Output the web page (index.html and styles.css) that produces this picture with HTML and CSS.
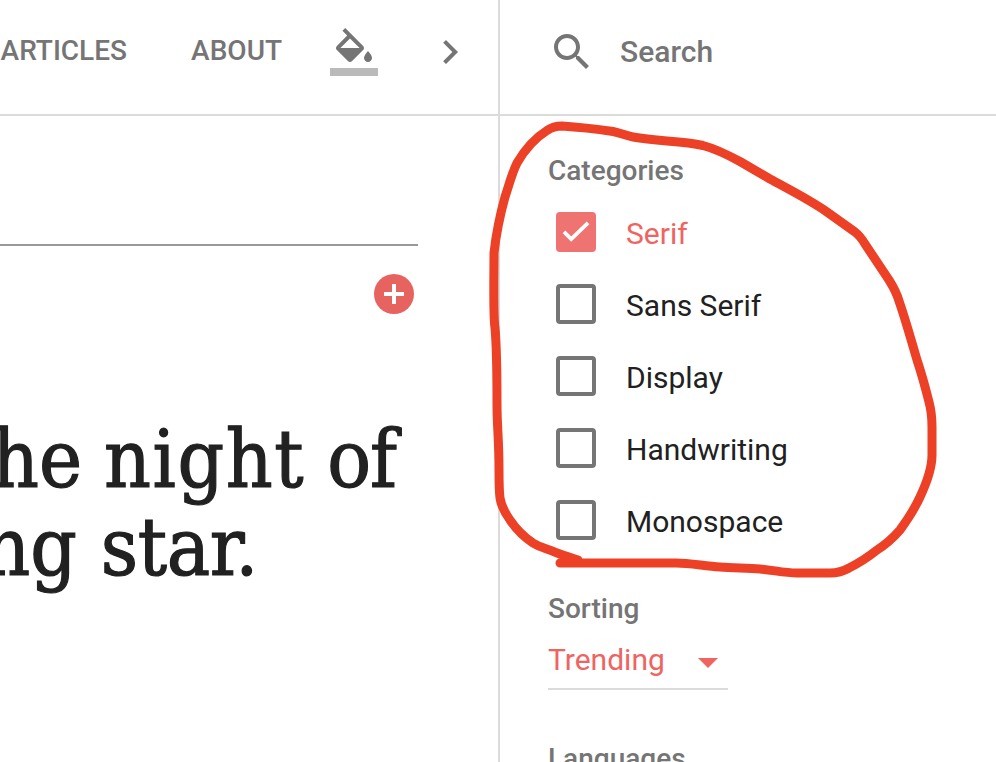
FILE: index.html
```html
<!DOCTYPE html>
<html lang="en">
<head>
<meta charset="utf-8">
<title>Fonts</title>
<link rel="stylesheet" href="styles.css">
</head>
<body>
<div class="app">
  <main class="main">
    <nav class="nav">
      <a class="nav-link">ARTICLES</a>
      <a class="nav-link about">ABOUT</a>
      <svg class="icon fill-icon" viewBox="0 0 24 24"><path d="M16.56 8.94L7.62 0 6.21 1.41l2.38 2.38-5.15 5.15c-.59.59-.59 1.54 0 2.12l5.5 5.5c.29.29.68.44 1.06.44s.77-.15 1.06-.44l5.5-5.5c.59-.58.59-1.53 0-2.12zM5.21 10L10 5.21 14.79 10H5.21zM19 11.5s-2 2.17-2 3.5c0 1.1.9 2 2 2s2-.9 2-2c0-1.33-2-3.5-2-3.5z"/><path class="swatch" d="M0 20h24v4H0z"/></svg>
      <svg class="icon" viewBox="0 0 24 24"><path d="M10 6L8.59 7.41 13.17 12l-4.58 4.59L10 18l6-6z"/></svg>
    </nav>
    <section class="card">
      <button class="add" aria-label="Add"><svg viewBox="0 0 40 40"><path d="M20 10v20M10 20h20"/></svg></button>
      <p class="sample"><span class="line first"><span>he</span> <span class="wide">night</span> <span class="tight">of</span></span><span class="line second"><span>ng</span> <span class="snug">star.</span></span></p>
    </section>
  </main>
  <aside class="side">
    <div class="search">
      <svg class="icon" viewBox="0 0 24 24"><path d="M15.5 14h-.79l-.28-.27C15.41 12.59 16 11.11 16 9.5 16 5.91 13.09 3 9.5 3S3 5.91 3 9.5 5.91 16 9.5 16c1.61 0 3.09-.59 4.23-1.57l.27.28v.79l5 4.99L20.49 19l-4.99-5zm-6 0C7.01 14 5 11.99 5 9.5S7.01 5 9.5 5 14 7.01 14 9.5 11.99 14 9.5 14z"/></svg>
      <span class="search-label">Search</span>
    </div>
    <div class="filters">
      <h2 class="heading">Categories</h2>
      <ul class="options">
        <li class="option selected"><span class="box"><svg viewBox="0 0 40 40"><path d="M8 19.8l7.2 7.2L32 10.8"/></svg></span><span class="name">Serif</span></li>
        <li class="option"><span class="box"></span><span class="name">Sans Serif</span></li>
        <li class="option"><span class="box"></span><span class="name">Display</span></li>
        <li class="option"><span class="box"></span><span class="name">Handwriting</span></li>
        <li class="option"><span class="box"></span><span class="name">Monospace</span></li>
      </ul>
      <h2 class="heading sorting">Sorting</h2>
      <div class="select"><span>Trending</span><svg class="arrow" viewBox="0 0 20 10"><path d="M0 0h20L10 10z"/></svg></div>
      <h2 class="heading languages">Languages</h2>
    </div>
  </aside>
  <svg class="marker" viewBox="0 0 996 762"><path d="M578 560C572 558 565 556 557 553C549 549 541 548 533 543C524 537 516 529 510 520C505 513 501 505 500 498C499 490 499 480 499 470C499 440 497 425 497 405C497 375 497 350 495 328C493 315 494 275 494 253C496 235 500 215 505 197C509 185 512 173 517 163C524 151 535 138 547 130.500C552 127 557 126 562 126C578 127 596 129 613 131.500C621 133 626 136 633 137C644 139 655 140 667 141C680 142 692 143 703 145.500C716 149 728 155 740 161.500L770 179C790 190 810 200 827 212L855 232C859 235 862 239 865 244L889 280C894 288 897 294 899 301C906 321 911 340 917 360C923 378 926 390 929 402C932 413 932 420 932 427L932 455C932 468 928 480 920 497C915 508 908 519 900 530C893 538 885 545 877 550C867 558 857 564 849 568C842 572 838 573 830 573L797 573C784 573 773 570 760 569C746 568 733 568 720 567C704 566 690 563 676 563L560 563"/></svg>
</div>
</body>
</html>
```
FILE: styles.css
```css
* { box-sizing: border-box; }
body { margin: 0; background: #fff; font-family: Roboto, "Liberation Sans", sans-serif; color: #212121; }
.app { position: relative; display: flex; width: 996px; height: 762px; overflow: hidden; }
.main { width: 498px; flex: none; }
.side { flex: 1; border-left: 2px solid #dbdbdb; }
.nav, .search { display: flex; align-items: center; height: 116px; border-bottom: 2px solid #dbdbdb; padding-bottom: 10px; color: #757575; font-size: 28px; font-weight: 500; line-height: 36px; }
.nav-link { width: 190.500px; margin-top: -3px; padding-left: .6px; white-space: nowrap; flex: none; }
.about { width: 139.500px; }
.icon { width: 48px; height: 48px; fill: #757575; flex: none; }
.fill-icon { margin-right: 48px; }
.swatch { opacity: .5; }
.card { width: 418px; margin-top: 128px; border-top: 2px solid #999; padding-top: 28px; }
.add { display: block; width: 40px; height: 40px; margin: 0 4px 0 auto; padding: 0; border: 0; border-radius: 50%; background: #e66360; }
.add svg { display: block; stroke: #fff; stroke-width: 4; }
.sample { margin: 101px 0 0; font-family: "Roboto Slab", "DejaVu Serif", serif; font-stretch: condensed; font-size: 81px; line-height: 88px; white-space: nowrap; -webkit-text-stroke: 1.2px #212121; }
.line { display: flex; justify-content: flex-end; gap: 22px; }
.first { width: 396px; }
.second { width: 258px; gap: 24px; }
.wide { letter-spacing: 1.6px; }
.tight { letter-spacing: -1px; }
.snug { letter-spacing: -.4px; }
.search { padding-left: 48px; }
.search-label { margin-left: 24px; font-size: 30px; }
.filters { padding: 36px 0 0 48px; }
.heading { margin: 0; font-size: 28px; font-weight: 500; line-height: 38px; color: #757575; }
.options { list-style: none; margin: 6px 0 0; padding: 0; }
.option { display: flex; align-items: center; height: 72px; padding-left: 8px; font-size: 30px; }
.box { width: 40px; height: 40px; border: 4px solid #757575; border-radius: 4px; margin-right: 30px; }
.name { margin-top: 3px; }
.selected { color: #ef6461; }
.selected .box { border: 0; background: #ef7370; }
.box svg { display: block; fill: none; stroke: #fff; stroke-width: 3.800; }
.sorting { margin-top: 34px; }
.select { display: flex; align-items: center; width: 180px; height: 62px; border-bottom: 2px solid #dbdbdb; padding: 2px 10.500px 0 0; justify-content: space-between; color: #ef6461; font-size: 30px; }
.arrow { width: 20px; height: 10px; fill: #ef6461; margin-top: 8px; }
.languages { margin-top: 50px; }
.marker { position: absolute; inset: 0; width: 996px; height: 762px; fill: none; stroke: #ec4126; stroke-width: 9; stroke-linecap: round; stroke-linejoin: round; pointer-events: none; }
```
